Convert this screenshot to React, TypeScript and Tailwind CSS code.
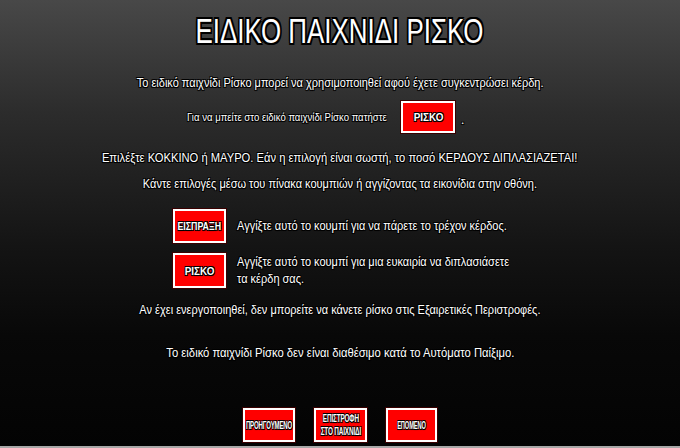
const outline = '[text-shadow:-1px_-1px_0_#000,1px_-1px_0_#000,-1px_1px_0_#000,1px_1px_0_#000,0_1px_1px_#000]';

function RedButton({ label, className = '', textClass = 'text-[11px] leading-[12px] scale-x-[0.9]' }: { label: React.ReactNode; className?: string; textClass?: string }) {
    return (
        <div className={`bg-[#ff0000] border-2 border-white shadow-[0_0_0_1px_#3a0000] flex items-center justify-center ${className}`}>
            <span className={`text-white font-bold text-center whitespace-nowrap ${textClass} ${outline}`}>
                {label}
            </span>
        </div>
    );
}

function Line({ children, className = '', scale = 'scale-x-[0.88]' }: { children: React.ReactNode; className?: string; scale?: string }) {
    return (
        <div className={`flex justify-center items-center h-[16px] ${className}`}>
            <span className={`text-white text-[12.5px] whitespace-nowrap ${scale} ${outline}`}>{children}</span>
        </div>
    );
}

export default function App() {
    return (
        <div
            className="w-[680px] h-[448px] overflow-hidden flex flex-col bg-[linear-gradient(to_bottom,#484848_0%,#2c2c2c_25%,#141414_55%,#080808_75%,#030303_100%)]"
            style={{ fontFamily: '"Liberation Sans", Arial, sans-serif' }}
        >
            {/* Title */}
            <div className="h-[60px] flex items-center justify-center">
                <h1 className="text-white text-[35px] leading-none whitespace-nowrap scale-x-[0.74] [text-shadow:-2px_-2px_0_#000,2px_-2px_0_#000,-2px_2px_0_#000,2px_2px_0_#000,0_2px_0_#000,0_-2px_0_#000,2px_0_0_#000,-2px_0_0_#000]">
                    ΕΙΔΙΚΟ ΠΑΙΧΝΙΔΙ ΡΙΣΚΟ
                </h1>
            </div>

            <Line className="mt-[15px]">
                Το ειδικό παιχνίδι Ρίσκο μπορεί να χρησιμοποιηθεί αφού έχετε συγκεντρώσει κέρδη.
            </Line>

            {/* Enter row */}
            <div className="mt-[10px] h-[32px] flex items-center pl-[187px]">
                <div className="w-[200px] flex">
                    <span className={`text-white text-[11px] whitespace-nowrap scale-x-[0.87] origin-left ${outline}`}>
                        Για να μπείτε στο ειδικό παιχνίδι Ρίσκο πατήστε
                    </span>
                </div>
                <RedButton label="ΡΙΣΚΟ" className="w-[54px] h-[32px] ml-[14px]" />
                <span className={`text-white text-[12px] ml-[6px] mt-[6px] ${outline}`}>.</span>
            </div>

            <Line className="mt-[17px]" scale="scale-x-[0.895]">
                Επιλέξτε ΚΟΚΚΙΝΟ ή ΜΑΥΡΟ. Εάν η επιλογή είναι σωστή, το ποσό ΚΕΡΔΟΥΣ ΔΙΠΛΑΣΙΑΖΕΤΑΙ!
            </Line>
            <Line className="mt-[10px]">
                Κάντε επιλογές μέσω του πίνακα κουμπιών ή αγγίζοντας τα εικονίδια στην οθόνη.
            </Line>

            {/* Button legend */}
            <div className="ml-[173px] mt-[17px] flex flex-col gap-[10px]">
                <div className="flex items-center gap-[11px]">
                    <RedButton label="ΕΙΣΠΡΑΞΗ" className="w-[53px] h-[34px] shrink-0" textClass="text-[11px] leading-[12px] scale-x-[0.8]" />
                    <span className={`text-white text-[12.5px] whitespace-nowrap scale-x-[0.88] origin-left ${outline}`}>
                        Αγγίξτε αυτό το κουμπί για να πάρετε το τρέχον κέρδος.
                    </span>
                </div>
                <div className="flex items-center gap-[11px]">
                    <RedButton label="ΡΙΣΚΟ" className="w-[53px] h-[35px] shrink-0" />
                    <span className={`text-white text-[12.5px] leading-[17px] whitespace-nowrap scale-x-[0.88] origin-left ${outline}`}>
                        Αγγίξτε αυτό το κουμπί για μια ευκαιρία να διπλασιάσετε
                        <br />
                        τα κέρδη σας.
                    </span>
                </div>
            </div>

            <Line className="mt-[14px]">
                Αν έχει ενεργοποιηθεί, δεν μπορείτε να κάνετε ρίσκο στις Εξαιρετικές Περιστροφές.
            </Line>
            <Line className="mt-[27px]" scale="scale-x-[0.9]">
                Το ειδικό παιχνίδι Ρίσκο δεν είναι διαθέσιμο κατά το Αυτόματο Παίξιμο.
            </Line>

            {/* Navigation */}
            <div className="mt-auto mb-[4px] flex justify-center gap-[19px]">
                <RedButton label="ΠΡΟΗΓΟΥΜΕΝΟ" className="w-[52px] h-[34px]" textClass="text-[11px] leading-[12px] scale-x-[0.55] tracking-tight" />
                <RedButton
                    label={<>ΕΠΙΣΤΡΟΦΗ<br />ΣΤΟ ΠΑΙΧΝΙΔΙ</>}
                    className="w-[53px] h-[34px]"
                    textClass="text-[11px] leading-[13px] scale-x-[0.58] tracking-tight"
                />
                <RedButton label="ΕΠΟΜΕΝΟ" className="w-[51px] h-[34px]" textClass="text-[11px] leading-[12px] scale-x-[0.52] tracking-tight" />
            </div>
            <div className="h-[2px] bg-[#a8a8a8]" />
        </div>
    );
}
